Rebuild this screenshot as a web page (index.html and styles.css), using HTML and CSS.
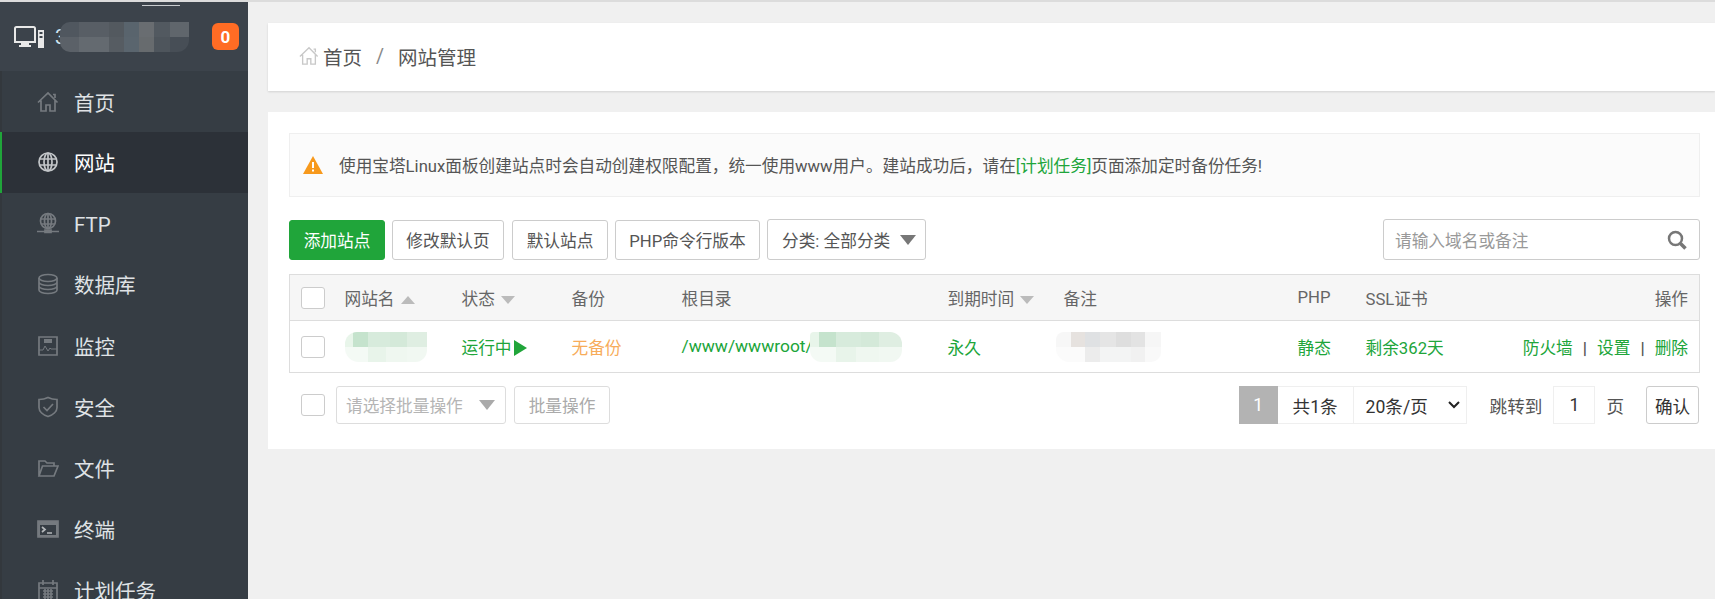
FILE: index.html
```html
<!DOCTYPE html>
<html lang="zh-CN">
<head>
<meta charset="utf-8">
<title>网站管理</title>
<link rel="stylesheet" href="styles.css">
</head>
<body>
<div class="app">
  <aside class="sidebar">
    <div class="brand">
      <svg class="brand-icon" viewBox="0 0 30 22" width="30" height="22"><path d="M1 2.500C1 1.700 1.700 1 2.500 1h17c.8 0 1.500.7 1.500 1.500V16H1z" fill="none" stroke="#e8e8e8" stroke-width="2"/><path d="M7 17h8v2h2v2H5v-2h2z" fill="#e8e8e8"/><path d="M24 4h6v18h-6z" fill="#e8e8e8"/><path d="M25.500 6h3v2h-3zM25.500 10h3v2h-3z" fill="#3c434b"/></svg>
      <span class="brand-name">3</span>
      <div class="mosaic brand-blob"></div>
      <span class="badge">0</span>
    </div>
    <nav class="menu">
      <a class="menu-item"><svg class="ico" viewBox="0 0 22 22"><path d="M1 11.500 11 2l9.500 9.500M4 9.500V20h5v-6h4v6h5V9.500M16 3.500h2v3.500"/></svg><span>首页</span></a>
      <a class="menu-item active"><svg class="ico" viewBox="0 0 22 22"><circle cx="11" cy="11" r="9"/><ellipse cx="11" cy="11" rx="4" ry="9"/><path d="M2 8h18M2 14h18M11 2v18"/></svg><span>网站</span></a>
      <a class="menu-item"><svg class="ico" viewBox="0 0 22 22"><circle cx="11" cy="9" r="7.500"/><ellipse cx="11" cy="9" rx="3.500" ry="7.500"/><path d="M4 7h14M4 12h14M11 2v15M0 19.500h22"/><path d="M8 18h6v2.500H8z" fill="#757a7f"/></svg><span class="latin">FTP</span></a>
      <a class="menu-item"><svg class="ico" viewBox="0 0 22 22"><ellipse cx="11" cy="5" rx="9" ry="3.500"/><path d="M2 5v12c0 2 4 3.500 9 3.500s9-1.500 9-3.500V5M2 9c0 2 4 3.500 9 3.500S20 11 20 9M2 13c0 2 4 3.500 9 3.500s9-1.500 9-3.500"/></svg><span>数据库</span></a>
      <a class="menu-item"><svg class="ico" viewBox="0 0 22 22"><path d="M2 2h18v18H2z"/><path d="M2 15h4l2-4 3 5 2-3 1 1h6" stroke-width="1"/><path d="M7 4h8v4H7z" fill="#757a7f" stroke="none"/></svg><span>监控</span></a>
      <a class="menu-item"><svg class="ico" viewBox="0 0 22 22"><path d="M11 1.500c3 1.500 6 2 9 2v8c0 4-4 7.500-9 9-5-1.500-9-5-9-9v-8c3 0 6-.5 9-2z"/><path d="m6.500 11 3.500 3.500 6-6.500"/></svg><span>安全</span></a>
      <a class="menu-item"><svg class="ico" viewBox="0 0 22 22"><path d="M2 19V4h6l2 2h7v3M2 19h15l4-10H5.500z"/></svg><span>文件</span></a>
      <a class="menu-item"><svg class="ico" viewBox="0 0 22 22"><path d="M1 3h20v16H1z" fill="#757a7f"/><path d="M3 7h16v10H3z" fill="#363d44" stroke="none"/><path d="m5 9 3 2.500L5 14M10 15h5" stroke="#b5b8bb"/></svg><span>终端</span></a>
      <a class="menu-item"><svg class="ico" viewBox="0 0 22 22"><path d="M2 4h18v17H2zM2 9h18M6 1v5M16 1v5M6 12h10M6 15h10M6 18h10M8 10v10M11 10v10M14 10v10"/></svg><span>计划任务</span></a>
    </nav>
  </aside>
  <main class="content">
    <div class="crumbs">
      <svg class="crumb-home" viewBox="0 0 22 22"><path d="M1 11.500 11 2l9.500 9.500M4 9.500V20h5v-6h4v6h5V9.500M16 3.500h2v3.500"/></svg>
      <span>首页</span><span class="crumb-sep">/</span><span>网站管理</span>
    </div>
    <section class="panel">
      <div class="alert">
        <svg class="warn" viewBox="0 0 20 18"><path d="M10 0 20 18H0z" fill="#f7991c"/><path d="M9 6h2v6H9zM9 13.500h2v2H9z" fill="#fff"/></svg>
        <span>使用宝塔Linux面板创建站点时会自动创建权限配置，统一使用www用户。建站成功后，请在<a class="link">[计划任务]</a>页面添加定时备份任务!</span>
      </div>
      <div class="toolbar">
        <button class="btn primary add">添加站点</button>
        <button class="btn w112">修改默认页</button>
        <button class="btn w96">默认站点</button>
        <button class="btn w145">PHP命令行版本</button>
        <div class="dropdown"><span>分类: 全部分类</span><i class="caret"></i></div>
        <div class="search"><span>请输入域名或备注</span>
          <svg class="search-ico" viewBox="0 0 20 20"><circle cx="8.500" cy="8.500" r="6.500"/><path d="m13.500 13.500 5 5" stroke-width="3.500"/></svg>
        </div>
      </div>
      <table class="grid">
        <colgroup><col class="c0"><col class="c1"><col class="c2"><col class="c3"><col class="c4"><col class="c5"><col class="c6"><col class="c7"><col class="c8"><col></colgroup>
        <thead>
          <tr>
            <th class="chk"><i class="box"></i></th>
            <th>网站名<i class="tri up"></i></th>
            <th>状态<i class="tri"></i></th>
            <th>备份</th>
            <th>根目录</th>
            <th>到期时间<i class="tri"></i></th>
            <th>备注</th>
            <th>PHP</th>
            <th>SSL证书</th>
            <th class="right">操作</th>
          </tr>
        </thead>
        <tbody>
          <tr>
            <td class="chk"><i class="box"></i></td>
            <td class="green"><div class="mosaic g-blob"></div></td>
            <td class="green">运行中<i class="play"></i></td>
            <td class="orange">无备份</td>
            <td class="green path">/www/wwwroot/<div class="mosaic g-blob long"></div></td>
            <td class="green">永久</td>
            <td><div class="mosaic grey-blob"></div></td>
            <td class="green">静态</td>
            <td class="green">剩余362天</td>
            <td class="right green">防火墙<b class="pipe">|</b>设置<b class="pipe">|</b>删除</td>
          </tr>
        </tbody>
      </table>
      <div class="footer">
        <div class="batch">
          <i class="box"></i>
          <div class="batch-select"><span>请选择批量操作</span><i class="caret light"></i></div>
          <button class="btn batch-btn">批量操作</button>
        </div>
        <div class="pager">
          <span class="page cur">1</span>
          <span class="page total">共1条</span>
          <span class="page size">20条/页<svg class="chev" viewBox="0 0 12 8"><path d="m1 1 5 5 5-5"/></svg></span>
          <span class="jump">跳转到</span>
          <span class="page num">1</span>
          <span class="jump">页</span>
          <button class="btn ok">确认</button>
        </div>
      </div>
    </section>
  </main>
</div>
</body>
</html>
```
FILE: styles.css
```css
* { box-sizing: border-box; }
html, body { margin: 0; height: 100%; overflow: hidden; }
body {
  background: #f0f0f0;
  color: #555;
  font-family: "Roboto", "Noto Sans CJK SC", sans-serif;
  font-size: 16.7px;
}
.app { display: flex; height: 599px; border-top: 2px solid #dcdcdc; }
.sidebar { width: 248px; flex: none; background: #363d44; overflow: hidden; }
.brand {
  height: 69px;
  background: #3c434b;
  display: flex;
  align-items: center;
  padding: 0 9px 0 14px;
  position: relative;
}
.brand::before {
  content: "";
  position: absolute;
  left: 142px;
  top: 3px;
  width: 38px;
  height: 1px;
  background: #c9cccf;
}
.brand-icon { flex: none; }
.brand-name { margin-left: 11px; color: #cfe3ef; font-size: 20px; flex: none; }
.mosaic { background-repeat: no-repeat; }
.brand-blob {
  width: 129px;
  height: 30px;
  margin-left: -6px;
  border-radius: 10px 0 12px 10px;
  background-color: #565d64;
  background-image:
    linear-gradient(90deg, #50575f 0 15%, #585e65 15% 38%, #53595f 38% 50%, #59646d 50% 61%, #696d71 61% 73%, #525960 73% 85%, #60666c 85% 100%),
    linear-gradient(90deg, #5b6168 0 15%, #646a70 15% 38%, #565c62 38% 50%, #5a656e 50% 61%, #676b6e 61% 73%, #4e555c 73% 85%, #474e56 85% 100%);
  background-size: 100% 50%, 100% 50%;
  background-position: top, bottom;
}
.badge {
  margin-left: auto;
  width: 27px;
  height: 27px;
  border-radius: 6px;
  background: #ff6c24;
  color: #fff;
  font-weight: 700;
  font-size: 17px;
  display: flex;
  align-items: center;
  justify-content: center;
}
.menu { border-left: 2px solid #33383d; }
.menu-item {
  height: 61.200px;
  display: flex;
  align-items: center;
  padding-left: 35px;
  color: #dfe2e5;
  font-size: 20.500px;
}
.menu-item.active {
  height: 60.400px;
  background: #2c3138;
  color: #fff;
  border-left: 2px solid #20a53a;
  margin-left: -2px;
}
.latin { padding-top: 3px; }
.ico {
  width: 22px;
  height: 22px;
  flex: none;
  margin-right: 15px;
  fill: none;
  stroke: #757a7f;
  stroke-width: 1.700;
}
.active .ico { stroke: #c2c5c8; }
.content { flex: 1; min-width: 0; padding: 21px 0 0 20px; }
.crumbs {
  height: 68px;
  background: #fff;
  box-shadow: 0 1px 2px rgba(0, 0, 0, .12);
  display: flex;
  align-items: center;
  padding: 0 0 2px 31px;
  color: #555;
  font-size: 19.500px;
}
.crumb-home {
  width: 20px;
  height: 20px;
  margin-right: 4px;
  fill: none;
  stroke: #c8c8c8;
  stroke-width: 1.500;
}
.crumb-sep { margin: 0 14px; color: #888; }
.panel {
  margin-top: 21px;
  height: 337px;
  background: #fff;
  padding: 21px 15px 0 21px;
}
.alert {
  height: 64px;
  background: #fbfbfb;
  border: 1px solid #efefef;
  display: flex;
  align-items: center;
  padding-left: 13px;
  color: #555;
  font-size: 16.660px;
}
.warn { width: 20px; height: 18px; margin-right: 16px; flex: none; }
.link { color: #20a53a; }
.toolbar { display: flex; align-items: center; margin-top: 22px; height: 41px; }
.btn {
  font: inherit;
  height: 40px;
  padding: 0;
  border: 1px solid #ccc;
  border-radius: 3px;
  background: #fff;
  color: #555;
  flex: none;
}
.primary.add {
  width: 96px;
  background: #20a53a;
  border-color: #20a53a;
  color: #fff;
  margin-right: 7px;
}
.w112 { width: 112px; margin-right: 8px; }
.w96 { width: 96px; margin-right: 7px; }
.w145 { width: 145px; margin-right: 7px; }
.dropdown {
  width: 159px;
  height: 41px;
  border: 1px solid #ccc;
  border-radius: 3px;
  display: flex;
  align-items: center;
  padding-left: 14px;
  color: #555;
}
.caret {
  width: 0;
  height: 0;
  border-left: 8px solid transparent;
  border-right: 8px solid transparent;
  border-top: 10px solid #777;
  margin-left: 10px;
}
.search {
  width: 317px;
  height: 41px;
  margin-left: auto;
  border: 1px solid #ccc;
  border-radius: 3px;
  display: flex;
  align-items: center;
  justify-content: space-between;
  padding: 0 12px 0 11px;
  color: #999;
}
.search-ico { width: 20px; height: 20px; fill: none; stroke: #777; stroke-width: 2.500; }
.grid {
  width: 1411px;
  margin-top: 14px;
  border-collapse: collapse;
  table-layout: fixed;
  border: 1px solid #ddd;
}
.c0 { width: 44px; } .c1 { width: 117px; } .c2 { width: 110px; } .c3 { width: 110px; }
.c4 { width: 266px; } .c5 { width: 116px; } .c6 { width: 234px; } .c7 { width: 68px; } .c8 { width: 150px; }
th, td { padding: 0 0 0 11px; text-align: left; font-weight: 400; white-space: nowrap; }
th { height: 46px; background: #f6f6f6; border-bottom: 1px solid #ddd; color: #666; }
td { height: 52px; }
th.chk, td.chk { padding-left: 11px; }
th.right, td.right { text-align: right; padding-right: 11px; }
.box {
  display: inline-block;
  width: 24px;
  height: 22px;
  border: 1px solid #ccc;
  border-radius: 3px;
  background: #fff;
  vertical-align: middle;
  flex: none;
}
.tri {
  display: inline-block;
  width: 0;
  height: 0;
  border-left: 7px solid transparent;
  border-right: 7px solid transparent;
  border-top: 8px solid #bbb;
  margin-left: 6px;
  vertical-align: 1px;
}
.tri.up { border-top: 0; border-bottom: 8px solid #bbb; }
.green { color: #20a53a; }
.orange { color: #f7ac5a; }
.play {
  display: inline-block;
  width: 0;
  height: 0;
  border-top: 8px solid transparent;
  border-bottom: 8px solid transparent;
  border-left: 13px solid #20a53a;
  margin-left: 2px;
  vertical-align: -2px;
}
.pipe { color: #555; font-weight: 700; margin: 0 10px; }
.g-blob {
  width: 82px;
  height: 30px;
  border-radius: 12px 0 12px 14px;
  background-image:
    linear-gradient(90deg, #e8f5ea 0 10%, #c5e3cd 10% 28%, #d7ebdc 28% 55%, #d4e9d9 55% 75%, #dfeee2 75% 100%),
    linear-gradient(90deg, #f4faf5 0 28%, #e8f4ea 28% 50%, #eff7f0 50% 75%, #f1f8f2 75% 100%);
  background-size: 100% 50%, 100% 50%;
  background-position: top, bottom;
}
td.path { font-size: 17.400px; }
.g-blob.long {
  display: inline-block;
  width: 92px;
  vertical-align: middle;
  margin-left: -3px;
  border-radius: 4px 12px 12px 12px;
}
.grey-blob {
  width: 105px;
  height: 30px;
  margin-left: -8px;
  border-radius: 8px 0 10px 14px;
  background-image:
    linear-gradient(90deg, #f7f7f7 0 14%, #e6e2df 14% 28%, #dfe1e3 28% 42%, #e5e5e5 42% 57%, #dedede 57% 71%, #e3e3e3 71% 85%, #f6f6f6 85% 100%),
    linear-gradient(90deg, #fbfbfb 0 28%, #ececec 28% 42%, #f3f4f4 42% 71%, #f1f1f1 71% 85%, #f9f9f9 85% 100%);
  background-size: 100% 50%, 100% 50%;
  background-position: top, bottom;
}
.footer { display: flex; justify-content: space-between; margin-top: 13px; height: 38px; }
.batch { display: flex; align-items: center; padding-left: 12px; }
.batch-select {
  width: 170px;
  height: 38px;
  margin-left: 11px;
  border: 1px solid #ddd;
  border-radius: 3px;
  display: flex;
  align-items: center;
  padding-left: 9px;
  color: #b5b5b5;
}
.caret.light { margin-left: 16px; border-top-color: #aaa; }
.batch-btn { width: 96px; height: 38px; margin-left: 8px; border-color: #ddd; color: #aaa; }
.pager { display: flex; align-items: center; color: #555; font-size: 17.600px; padding-right: 1px; }
.page {
  height: 38px;
  border: 1px solid #efefef;
  display: flex;
  align-items: center;
  justify-content: center;
}
.cur { width: 39px; background: #b3b3b3; border-color: #b3b3b3; color: #fff; }
.total { width: 75px; border-left: 0; border-right: 0; color: #333; }
.size { width: 114px; justify-content: flex-start; padding-left: 12px; color: #333; }
.chev { width: 12px; height: 8px; margin-left: 20px; fill: none; stroke: #222; stroke-width: 2; }
.jump { margin: 0 11px 0 23px; }
.num { width: 42px; color: #333; }
.num + .jump { margin: 0 22px 0 11px; }
.ok { width: 53px; height: 38px; color: #333; }
```
